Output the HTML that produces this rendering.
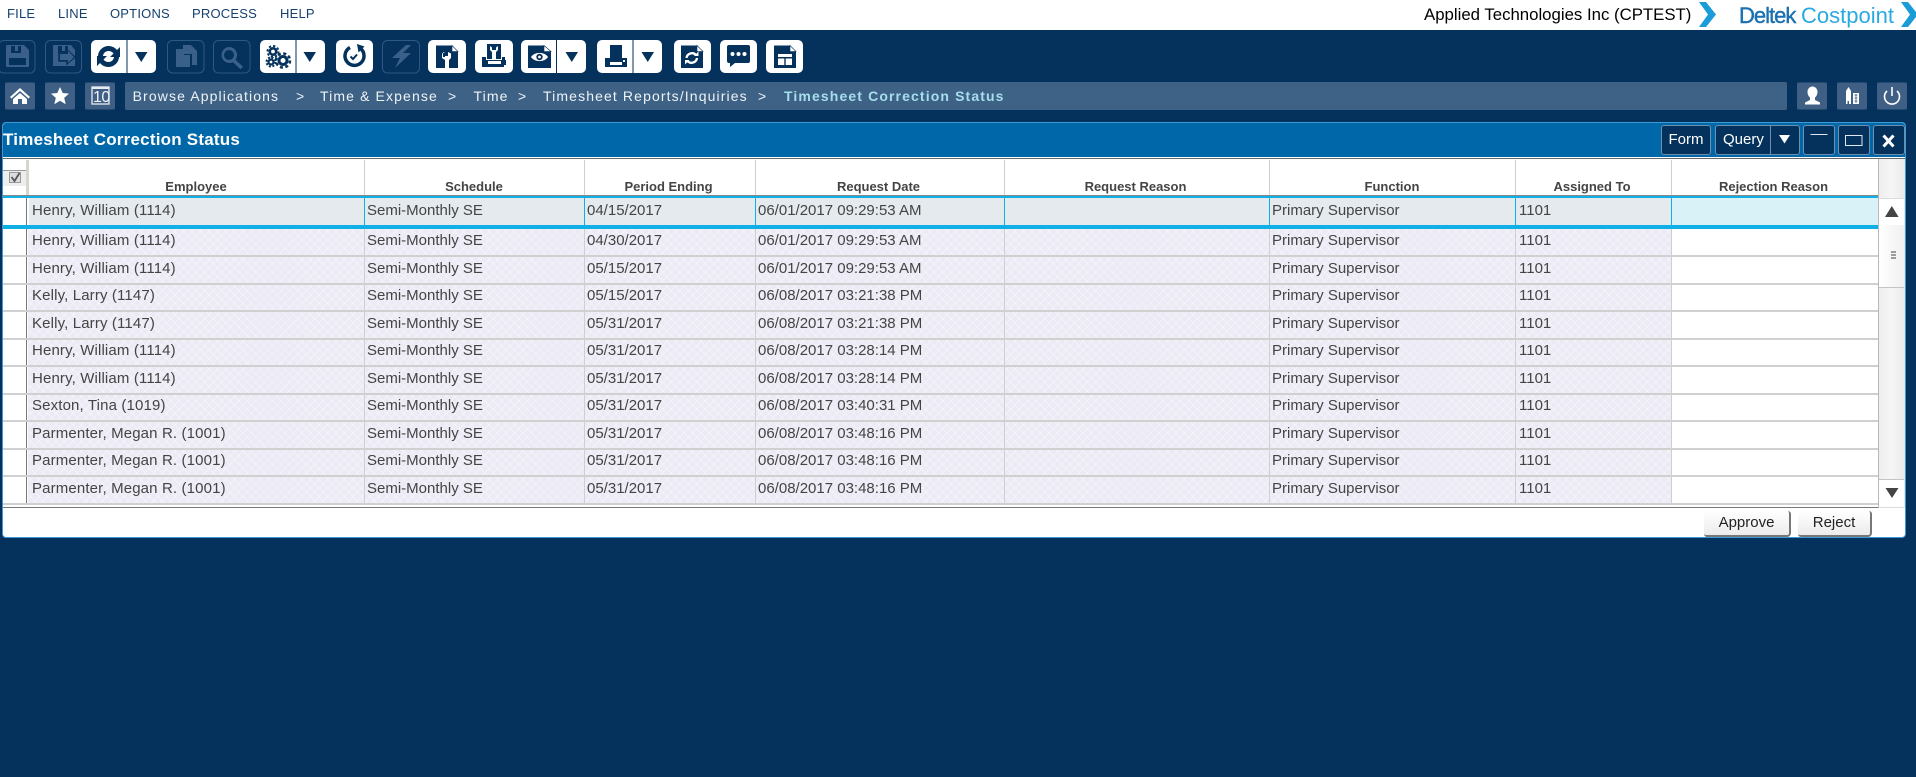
<!DOCTYPE html>
<html><head><meta charset="utf-8"><title>Timesheet Correction Status</title>
<style>
html,body{margin:0;padding:0;width:1916px;height:777px;overflow:hidden;background:#05325c;font-family:"Liberation Sans",sans-serif}
div,span{position:absolute;white-space:nowrap}
.m{top:6px;font-size:13px;line-height:16px;letter-spacing:.2px;color:#16416e}
.b{top:88px;font-size:14px;line-height:16px;letter-spacing:1.12px;color:#eef3f7}
.r{left:28px;width:1643px;background-color:#ebeaf5;background-image:repeating-linear-gradient(45deg,rgba(255,255,255,.38) 0 1px,transparent 1px 6px),repeating-linear-gradient(-45deg,rgba(255,255,255,.38) 0 1px,transparent 1px 6px)}
.s{left:3px;width:1875px;height:2px;background:#d0d0d0}
.v{width:1px;background:#cfcfcf}
.t{font-size:15px;line-height:18px;color:#444}
.n{left:32px;letter-spacing:.14px}
.h{top:179px;font-size:13px;line-height:16px;font-weight:bold;color:#444;text-align:center}
.k{width:1px;background:#777;left:26px}
.q{top:125px;height:28px;border:1px solid #6e90ae;border-radius:3px;background:#05325c;color:#fff}
.ab{top:511px;height:24px;background:linear-gradient(#fff,#ececec);border-right:2px solid #777;border-bottom:2px solid #777;border-radius:0 3px 4px 3px;font-size:15px;line-height:23px;text-align:center;color:#222}
</style></head><body>
<div style="left:0;top:0;width:1916px;height:30px;background:#fff"></div>
<div class="m" style="left:7px">FILE</div>
<div class="m" style="left:58px">LINE</div>
<div class="m" style="left:110px">OPTIONS</div>
<div class="m" style="left:192px">PROCESS</div>
<div class="m" style="left:280px">HELP</div>
<div style="left:1424px;top:5px;font-size:16.8px;line-height:20px;color:#000">Applied Technologies Inc (CPTEST)</div>
<div style="left:1739px;top:3px;font-size:22px;line-height:26px;letter-spacing:-1px;color:#1a70b0;-webkit-text-stroke:.4px #1a70b0">Deltek</div>
<div style="left:1801px;top:3px;font-size:22px;line-height:26px;color:#2aa9e0">Costpoint</div>

<div style="left:125px;top:82px;width:1662px;height:28px;background:#3e6285;border-radius:2px"></div>
<div class="b" style="left:132.6px">Browse Applications</div>
<div class="b" style="left:296px">&gt;</div>
<div class="b" style="left:320px">Time &amp; Expense</div>
<div class="b" style="left:448px">&gt;</div>
<div class="b" style="left:473.5px">Time</div>
<div class="b" style="left:518px">&gt;</div>
<div class="b" style="left:543px">Timesheet Reports/Inquiries</div>
<div class="b" style="left:758px">&gt;</div>
<div class="b" style="left:784px;font-weight:bold;color:#a6deed">Timesheet Correction Status</div>

<!-- panel -->
<div style="left:2px;top:122px;width:1902px;height:414px;background:#fff;border:1px solid #3a9ad6;border-radius:4px"></div>
<div style="left:3px;top:123px;width:1902px;height:34px;background:#0068a9;border-radius:3px 3px 0 0"></div>
<div style="left:3px;top:130px;font-size:17px;line-height:19px;font-weight:bold;letter-spacing:.22px;color:#fff">Timesheet Correction Status</div>
<div class="q" style="left:1661px;width:48px;font-size:15px;line-height:28px;text-align:center">Form</div>
<div class="q" style="left:1715px;width:83px;font-size:15px;line-height:28px"><span style="left:7px;top:0">Query</span></div>
<div style="left:1770px;top:125px;width:1px;height:30px;background:#6e90ae"></div>
<div class="q" style="left:1803px;width:30px"></div>
<div class="q" style="left:1838px;width:30px"></div>
<div class="q" style="left:1873px;width:30px"></div>

<!-- grid header -->
<div style="left:3px;top:158px;width:1902px;height:1px;background:#666"></div>
<div style="left:3px;top:159px;width:1875px;height:36px;background:#fff"></div>
<div style="left:3px;top:170px;width:23px;height:15px;background:#eeeeee;border-top:1px solid #999"></div>
<div style="left:26px;top:160px;width:3px;height:35px;background:#d6d6cc"></div>
<div class="v" style="left:364px;top:160px;height:35px"></div>
<div class="v" style="left:584px;top:160px;height:35px"></div>
<div class="v" style="left:755px;top:160px;height:35px"></div>
<div class="v" style="left:1004px;top:160px;height:35px"></div>
<div class="v" style="left:1269px;top:160px;height:35px"></div>
<div class="v" style="left:1515px;top:160px;height:35px"></div>
<div class="v" style="left:1671px;top:160px;height:35px"></div>
<div class="h" style="left:28px;width:336px">Employee</div>
<div class="h" style="left:364px;width:220px">Schedule</div>
<div class="h" style="left:583px;width:171px">Period Ending</div>
<div class="h" style="left:754px;width:249px">Request Date</div>
<div class="h" style="left:1003px;width:265px">Request Reason</div>
<div class="h" style="left:1269px;width:246px">Function</div>
<div class="h" style="left:1514px;width:156px">Assigned To</div>
<div class="h" style="left:1670px;width:207px">Rejection Reason</div>
<div style="left:3px;top:195px;width:1875px;height:1px;background:#888"></div>

<!-- row backgrounds -->
<div style="left:29px;top:198px;width:1642px;height:27px;background:#e4eaee"></div>
<div style="left:1671px;top:198px;width:207px;height:27px;background:#d8f2f8"></div>
<div class="r" style="top:229px;height:26px"></div>
<div class="r" style="top:257px;height:26px"></div>
<div class="r" style="top:285px;height:25px"></div>
<div class="r" style="top:312px;height:26px"></div>
<div class="r" style="top:340px;height:25px"></div>
<div class="r" style="top:367px;height:26px"></div>
<div class="r" style="top:395px;height:25px"></div>
<div class="r" style="top:422px;height:26px"></div>
<div class="r" style="top:450px;height:25px"></div>
<div class="r" style="top:477px;height:26px"></div>
<div class="v" style="left:364px;top:198px;height:27px;background:#10b0e6"></div><div class="v" style="left:584px;top:198px;height:27px;background:#10b0e6"></div><div class="v" style="left:755px;top:198px;height:27px;background:#10b0e6"></div><div class="v" style="left:1004px;top:198px;height:27px;background:#10b0e6"></div><div class="v" style="left:1269px;top:198px;height:27px;background:#10b0e6"></div><div class="v" style="left:1515px;top:198px;height:27px;background:#10b0e6"></div><div class="v" style="left:1671px;top:198px;height:27px;background:#10b0e6"></div>
<div class="v" style="left:364px;top:229px;height:274px"></div><div class="v" style="left:584px;top:229px;height:274px"></div><div class="v" style="left:755px;top:229px;height:274px"></div><div class="v" style="left:1004px;top:229px;height:274px"></div><div class="v" style="left:1269px;top:229px;height:274px"></div><div class="v" style="left:1515px;top:229px;height:274px"></div><div class="v" style="left:1671px;top:229px;height:274px"></div>
<div class="k" style="top:198px;height:27px"></div><div class="k" style="top:229px;height:274px"></div>
<div class="s" style="top:255px"></div><div class="s" style="top:283px"></div><div class="s" style="top:310px"></div><div class="s" style="top:338px"></div><div class="s" style="top:365px"></div><div class="s" style="top:393px"></div><div class="s" style="top:420px"></div><div class="s" style="top:448px"></div><div class="s" style="top:475px"></div><div class="s" style="top:503px"></div>
<div style="left:3px;top:507px;width:1875px;height:1px;background:#777"></div>
<div style="left:3px;top:196px;width:1875px;height:2px;background:#10b0e6"></div>
<div style="left:3px;top:225px;width:1875px;height:4px;background:#10b0e6"></div>

<!-- scrollbar -->
<div style="left:1878px;top:159px;width:27px;height:349px;background:linear-gradient(90deg,#ededed,#f6f6f6,#eaeaea);box-shadow:inset 1px 0 0 #b8b8b8"></div>
<div style="left:1879px;top:198px;width:25px;height:26px;background:#fff;border-bottom:1px solid #c4c4c4;border-top:1px solid #dcdcdc"></div>
<div style="left:1879px;top:225px;width:25px;height:62px;background:linear-gradient(90deg,#fff,#f0f0f0);border-bottom:1px solid #c4c4c4"></div>
<div style="left:1879px;top:479px;width:25px;height:27px;background:#fff;border-top:1px solid #c4c4c4;border-bottom:1px solid #dcdcdc"></div>

<!-- row text -->
<div class="t n" style="top:202px">Henry, William (1114)</div><div class="t" style="left:367px;top:202px">Semi-Monthly SE</div><div class="t" style="left:587px;top:202px">04/15/2017</div><div class="t" style="left:758px;top:202px">06/01/2017 09:29:53 AM</div><div class="t" style="left:1272px;top:202px">Primary Supervisor</div><div class="t" style="left:1519px;top:202px">1101</div>
<div class="t n" style="top:232px">Henry, William (1114)</div><div class="t" style="left:367px;top:232px">Semi-Monthly SE</div><div class="t" style="left:587px;top:232px">04/30/2017</div><div class="t" style="left:758px;top:232px">06/01/2017 09:29:53 AM</div><div class="t" style="left:1272px;top:232px">Primary Supervisor</div><div class="t" style="left:1519px;top:232px">1101</div>
<div class="t n" style="top:260px">Henry, William (1114)</div><div class="t" style="left:367px;top:260px">Semi-Monthly SE</div><div class="t" style="left:587px;top:260px">05/15/2017</div><div class="t" style="left:758px;top:260px">06/01/2017 09:29:53 AM</div><div class="t" style="left:1272px;top:260px">Primary Supervisor</div><div class="t" style="left:1519px;top:260px">1101</div>
<div class="t n" style="top:287px">Kelly, Larry (1147)</div><div class="t" style="left:367px;top:287px">Semi-Monthly SE</div><div class="t" style="left:587px;top:287px">05/15/2017</div><div class="t" style="left:758px;top:287px">06/08/2017 03:21:38 PM</div><div class="t" style="left:1272px;top:287px">Primary Supervisor</div><div class="t" style="left:1519px;top:287px">1101</div>
<div class="t n" style="top:315px">Kelly, Larry (1147)</div><div class="t" style="left:367px;top:315px">Semi-Monthly SE</div><div class="t" style="left:587px;top:315px">05/31/2017</div><div class="t" style="left:758px;top:315px">06/08/2017 03:21:38 PM</div><div class="t" style="left:1272px;top:315px">Primary Supervisor</div><div class="t" style="left:1519px;top:315px">1101</div>
<div class="t n" style="top:342px">Henry, William (1114)</div><div class="t" style="left:367px;top:342px">Semi-Monthly SE</div><div class="t" style="left:587px;top:342px">05/31/2017</div><div class="t" style="left:758px;top:342px">06/08/2017 03:28:14 PM</div><div class="t" style="left:1272px;top:342px">Primary Supervisor</div><div class="t" style="left:1519px;top:342px">1101</div>
<div class="t n" style="top:370px">Henry, William (1114)</div><div class="t" style="left:367px;top:370px">Semi-Monthly SE</div><div class="t" style="left:587px;top:370px">05/31/2017</div><div class="t" style="left:758px;top:370px">06/08/2017 03:28:14 PM</div><div class="t" style="left:1272px;top:370px">Primary Supervisor</div><div class="t" style="left:1519px;top:370px">1101</div>
<div class="t n" style="top:397px">Sexton, Tina (1019)</div><div class="t" style="left:367px;top:397px">Semi-Monthly SE</div><div class="t" style="left:587px;top:397px">05/31/2017</div><div class="t" style="left:758px;top:397px">06/08/2017 03:40:31 PM</div><div class="t" style="left:1272px;top:397px">Primary Supervisor</div><div class="t" style="left:1519px;top:397px">1101</div>
<div class="t n" style="top:425px">Parmenter, Megan R. (1001)</div><div class="t" style="left:367px;top:425px">Semi-Monthly SE</div><div class="t" style="left:587px;top:425px">05/31/2017</div><div class="t" style="left:758px;top:425px">06/08/2017 03:48:16 PM</div><div class="t" style="left:1272px;top:425px">Primary Supervisor</div><div class="t" style="left:1519px;top:425px">1101</div>
<div class="t n" style="top:452px">Parmenter, Megan R. (1001)</div><div class="t" style="left:367px;top:452px">Semi-Monthly SE</div><div class="t" style="left:587px;top:452px">05/31/2017</div><div class="t" style="left:758px;top:452px">06/08/2017 03:48:16 PM</div><div class="t" style="left:1272px;top:452px">Primary Supervisor</div><div class="t" style="left:1519px;top:452px">1101</div>
<div class="t n" style="top:480px">Parmenter, Megan R. (1001)</div><div class="t" style="left:367px;top:480px">Semi-Monthly SE</div><div class="t" style="left:587px;top:480px">05/31/2017</div><div class="t" style="left:758px;top:480px">06/08/2017 03:48:16 PM</div><div class="t" style="left:1272px;top:480px">Primary Supervisor</div><div class="t" style="left:1519px;top:480px">1101</div>

<div class="ab" style="left:1704px;width:85px">Approve</div>
<div class="ab" style="left:1798px;width:72px">Reject</div>

<svg width="1916" height="777" viewBox="0 0 1916 777" style="position:absolute;left:0;top:0">
<!-- logo chevrons -->
<path d="M1699 2h7l10 12.500-10 12.500h-7l9-12.500z" fill="#1a9cd8"/>
<path d="M1901 2h7l8 10v5l-8 10h-7l9-12.500z" fill="#1a9cd8"/>
<!-- disabled buttons -->
<g fill="none" stroke="#2c5882" stroke-width="1">
<rect x="-1.500" y="40.500" width="36.500" height="32.500" rx="5"/><rect x="45.500" y="40.500" width="36" height="32.500" rx="5"/><rect x="167.500" y="40.500" width="36.500" height="32.500" rx="5"/><rect x="213.500" y="40.500" width="36.500" height="32.500" rx="5"/><rect x="382.500" y="40.500" width="37" height="32.500" rx="5"/>
</g>
<g fill="#3a608a">
<path fill-rule="evenodd" d="M7 45h17l5 5v16a1 1 0 0 1-1 1H7a1 1 0 0 1-1-1V46a1 1 0 0 1 1-1zm4 1v7h10v-7h-3v5h-3v-5zM9 58v7h17v-7z"/>
<path fill-rule="evenodd" d="M54 45h17l4 5v16H53V46a1 1 0 0 1 1-1zm4 1v7h10v-7h-3v5h-3v-5z"/>
<path d="M176 49h8v6h6v12h-14zM183 45h8l6 6v14h-5V54h-9z"/>
<path fill-rule="evenodd" d="M229 47a8 8 0 0 1 6.500 12.700l7.500 7-2.500 2.500-7.500-7A8 8 0 1 1 229 47zm0 3a5 5 0 1 0 0 10 5 5 0 0 0 0-10z"/>
<path d="M406 45L392 58h8l-5 10 16-15h-8l8-8z"/>
</g>
<path d="M59 53h8v-3l8 7-8 7v-3h-8z" fill="#05325c" stroke="#05325c" stroke-width="1.500"/><path d="M60 54h8v-3l6 6-6 6v-3h-8z" fill="#3a608a"/>
<!-- white buttons -->
<g fill="#fff">
<rect x="91" y="40" width="65" height="33" rx="5"/><rect x="260" y="40" width="65" height="33" rx="5"/><rect x="336" y="40" width="37" height="33" rx="5"/><rect x="428" y="40" width="38" height="33" rx="5"/><rect x="475" y="40" width="38" height="33" rx="5"/><rect x="521" y="40" width="65" height="33" rx="5"/><rect x="597" y="40" width="65" height="33" rx="5"/><rect x="674" y="40" width="37" height="33" rx="5"/><rect x="720" y="40" width="37" height="33" rx="5"/><rect x="766" y="40" width="37" height="33" rx="5"/>
</g>
<g fill="#05325c">
<rect x="126.500" y="40" width="1" height="33"/><rect x="295.500" y="40" width="1" height="33"/><rect x="556" y="40" width="1" height="33"/><rect x="632.500" y="40" width="1" height="33"/>
<path d="M135 52h12.500l-6.250 10z"/><path d="M303.500 52h12.500l-6.250 10z"/><path d="M565.500 52h12.500l-6.250 10z"/><path d="M641.500 52h12.500l-6.250 10z"/>
<!-- refresh -->
<path d="M98 56.500c0-6 5-10.500 10.500-10.500 3.500 0 6.500 1.500 8.500 4l3-3v10h-10l3.500-3.500c-1.200-1.600-3-2.500-5-2.500-3.300 0-5.500 2.500-5.500 5.500z"/>
<path d="M119 56.500c0 6-5 10.500-10.500 10.500-3.500 0-6.500-1.500-8.500-4l-3 3v-10h10l-3.500 3.500c1.200 1.600 3 2.500 5 2.500 3.300 0 5.500-2.500 5.500-5.500z"/>
<!-- docs -->
<path d="M436 45.500h16l6 6v16.500h-22z"/><path d="M528 45.500h16l7 6v16.500h-23z"/><path d="M681 45.500h16l6 6v16.500h-22z"/><path d="M774 45.500h16l6 6v16.500h-22z"/>
<!-- printer wrench base and box -->
<path d="M482 57h4v3h16v-3h3v3h1v5h-2v2h-22z"/>
<rect x="487" y="44" width="14" height="15"/>
<path d="M610 45h12v13h-12zM605 58h22v9h-22z"/>
<!-- comment -->
<path d="M729 45h19a2 2 0 0 1 2 2v14a2 2 0 0 1-2 2h-13l-5 4v-4h-1a2 2 0 0 1-2-2V47a2 2 0 0 1 2-2z"/>
</g>
<!-- folded corners & inner whites -->
<g fill="#fff">
<path d="M452 45.500l6 6h-6z" stroke="#05325c" stroke-width=".6"/><path d="M544 45.500l7 6h-7z" stroke="#05325c" stroke-width=".6"/><path d="M697 45.500l6 6h-6z" stroke="#05325c" stroke-width=".6"/><path d="M790 45.500l6 6h-6z" stroke="#05325c" stroke-width=".6"/>
<path d="M443 52v5h2v-5h0zM445 56h3v-4l3 1.500v4.500l-2 2v8h-4v-8l-3-2v-4.500l3-1.500z"/>
<circle cx="732.500" cy="54" r="2"/><circle cx="738.500" cy="54" r="2"/><circle cx="744.500" cy="54" r="2"/>
<rect x="778" y="54" width="14" height="3"/><rect x="778" y="58.500" width="6.300" height="6.500"/><rect x="785.700" y="58.500" width="6.300" height="6.500"/>
<rect x="610" y="62" width="12" height="3"/><rect x="623" y="60" width="2" height="2"/>
<rect x="488" y="61" width="13" height="3"/>
<path d="M490 46v4l2 2v7h4v-7l2-2v-4l-2 1.500V50h-4v-2.500z"/>
</g>
<!-- doc refresh -->
<g fill="none" stroke="#fff" stroke-width="2.300">
<path d="M686.500 58a5.500 5.500 0 0 1 9.500-3"/><path d="M697 58a5.500 5.500 0 0 1-9.500 3"/>
</g>
<path d="M694 56h4.500v-4.500zM689.500 60H685v4.500z" fill="#fff"/>
<!-- eye -->
<path d="M531 57c3.500-5.500 13.500-5.500 17 0-3.500 5.500-13.500 5.500-17 0z" fill="#fff"/><circle cx="539.500" cy="57" r="3.200" fill="#05325c"/><circle cx="539.500" cy="57" r="1.400" fill="#fff"/>
<!-- gears -->
<g fill="none" stroke="#05325c">
<circle cx="273" cy="51.500" r="3.200" stroke-width="2.600"/><circle cx="273" cy="51.500" r="5.500" stroke-width="2" stroke-dasharray="2.300 2"/>
<circle cx="271" cy="62" r="2.500" stroke-width="2.200"/><circle cx="271" cy="62" r="4.500" stroke-width="2" stroke-dasharray="2 1.600"/>
<circle cx="283" cy="60.500" r="4" stroke-width="3"/><circle cx="283" cy="60.500" r="7" stroke-width="2.500" stroke-dasharray="3 2.500"/>
<!-- history -->
<path d="M360.500 48.500a9.500 9.500 0 1 1-10.500-1" stroke-width="3.500"/>
<path d="M350.500 56.500l2.500 2.500 4-4.500" stroke-width="2"/>
</g>
<path d="M357 44l7.500 2.500-6 6z" fill="#05325c"/>
<!-- nav buttons -->
<g fill="#3f6084">
<rect x="5" y="82.500" width="30" height="27" rx="2"/><rect x="45" y="82.500" width="30" height="27" rx="2"/><rect x="85" y="82.500" width="30" height="27" rx="2"/><rect x="1797" y="82.500" width="30" height="27" rx="2"/><rect x="1837" y="82.500" width="30" height="27" rx="2"/><rect x="1877" y="82.500" width="30" height="27" rx="2"/>
</g>
<path d="M20 88l10 9-1.500 1.500L20 91l-8.500 7.500L10 97zM13 99l7-6 7 6v5h-5v-5h-4v5h-5z" fill="#fff"/>
<path d="M60 87l2.700 6 6.300.6-4.800 4.300 1.500 6.300-5.700-3.400-5.700 3.400 1.500-6.300-4.800-4.300 6.300-.6z" fill="#fff"/>
<rect x="92" y="87" width="17" height="17" fill="none" stroke="#e6ecf2" stroke-width="1.300"/><rect x="92" y="87" width="17" height="2" fill="#e6ecf2"/>
<path d="M1812.500 86.500c3 0 5 2.500 5 5.500 0 2.500-1.300 4.500-2.500 5.500v2.500l5 2.500v2h-15v-2l5-2.500v-2.500c-1.200-1-2.500-3-2.500-5.500 0-3 2-5.500 5-5.500z" fill="#fff"/>
<path fill="#fff" fill-rule="evenodd" d="M1846 91l2.500-4 2.500 4v13h-2v-3h-1.500v3h-1.500zM1853 93h6v11h-6z"/>
<path d="M1854.500 95h3M1854.500 98h3M1854.500 101h3M1856 94v9" stroke="#3f6084" stroke-width=".8"/>
<g fill="none" stroke="#fff" stroke-width="1.600"><path d="M1887 91a7.500 7.500 0 1 0 10 0"/><path d="M1892 87v9"/></g>
<!-- checkbox -->
<rect x="9.500" y="172.500" width="11" height="10" fill="#ddd" stroke="#999"/><path d="M11.500 177l3 4 5-8" fill="none" stroke="#555" stroke-width="1.800"/>
<!-- title buttons -->
<path d="M1779 135h11l-5.500 8.500z" fill="#fff"/>
<rect x="1810.500" y="134" width="17" height="1" fill="#dfe8f0"/>
<rect x="1845.500" y="135.500" width="16.500" height="10" fill="none" stroke="#dfe8f0"/>
<path d="M1883.500 135.500l10 11M1893.500 135.500l-10 11" stroke="#fff" stroke-width="3"/>
<!-- scroll arrows -->
<path d="M1885 217l6.800-11 6.800 11z" fill="#444"/>
<path d="M1885.500 488h13l-6.500 10z" fill="#444"/>
<path d="M1891 252h5M1891 255h5M1891 258h5" stroke="#666" stroke-width="1.200"/>
</svg>
<div style="left:93px;top:90px;font-size:16px;line-height:15px;letter-spacing:-.5px;color:#eef3f7">10</div>
</body></html>
